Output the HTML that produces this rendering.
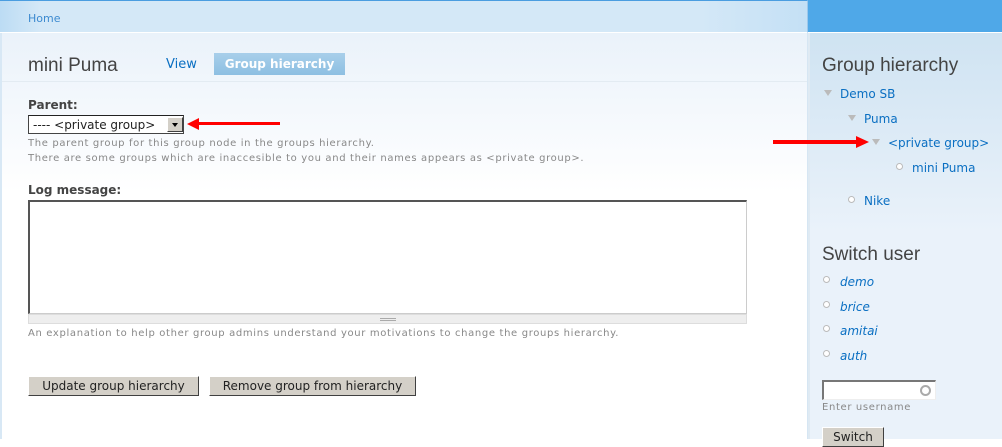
<!DOCTYPE html>
<html><head><style>
*{margin:0;padding:0;box-sizing:border-box}
body{width:1002px;height:439px;overflow:hidden;position:relative;background:#fff;font-family:"DejaVu Sans","Liberation Sans",sans-serif;font-size:12px;color:#444}
.a{position:absolute}
a{color:#0a6fc2;text-decoration:none}
.topbar{left:0;top:0;width:808px;height:33px;background:linear-gradient(90deg,#bcdcf4 0,#d4e8f7 40px,#d4e8f7 700px,#c4e0f5);border-top:1px solid #4a9de0;border-right:1px solid #9cc8ec;border-bottom:1px solid #fff}
.topr{left:808px;top:0;width:194px;height:33px;background:#4fa8e8;border-bottom:1px solid #fff}
.main{left:0;top:33px;width:808px;height:406px;background:linear-gradient(#eaf2fa 0,#fff 160px);border-left:2px solid #d8e8f5;border-right:1px solid #d6e6f3}
.side{left:808px;top:33px;width:194px;height:406px;background:linear-gradient(#cfe3f2,#eaf2fa 200px);border-left:2px solid #dfeaf3}
.tri{display:inline-block;width:0;height:0;border-left:4px solid transparent;border-right:4px solid transparent;border-top:6px solid #bbb;}
.circ{width:7px;height:7px;border:1px solid #bbb;border-radius:50%;background:#fff}
.desc{font-size:10px;color:#888;letter-spacing:.65px}
.btn{background:#d4d0c8;border:1px solid #fff;border-right-color:#404040;border-bottom-color:#404040;font-size:12px;color:#222;height:20px;text-align:center;line-height:18px}
</style></head><body>
<div class="a topbar"></div>
<div class="a topr"></div>
<a class="a" style="left:28px;top:12px;font-size:11px;color:#3c8ad0">Home</a>
<div class="a main"></div>
<div class="a" style="left:2px;top:81px;width:805px;height:1px;background:#e3ebf2"></div>
<div class="a" style="left:28px;top:55px;font-family:'Liberation Sans',sans-serif;font-size:19px;color:#444">mini Puma</div>
<a class="a" style="left:166px;top:57px;font-size:13px">View</a>
<div class="a" style="left:214px;top:53px;width:131px;height:22px;background:linear-gradient(#a8cfea,#8dbfe2);color:#fff;font-weight:bold;font-size:12px;text-align:center;line-height:22px">Group hierarchy</div>
<div class="a" style="left:28px;top:98px;font-weight:bold;font-size:12px">Parent:</div>
<div class="a" style="left:28px;top:115px;width:156px;height:19px;border:1px solid #444;border-top-color:#222;background:#fff;font-size:12px;line-height:18px;padding-left:4px;color:#222">---- &lt;private group&gt;</div>
<div class="a" style="left:167px;top:117px;width:16px;height:15px;background:#d4d0c8;border:1px solid #fff;border-right-color:#404040;border-bottom-color:#404040"><div style="margin:5px 0 0 4px;width:0;height:0;border-left:3px solid transparent;border-right:3px solid transparent;border-top:4px solid #000"></div></div>
<svg class="a" style="left:185px;top:117px" width="97" height="14"><path d="M2 7 L14 1 L14 5 L95 5 L95 8 L14 8 L14 13 Z" fill="#f00"/></svg>
<div class="a desc" style="left:28px;top:138px">The parent group for this group node in the groups hierarchy.</div>
<div class="a desc" style="left:28px;top:153px">There are some groups which are inaccesible to you and their names appears as &lt;private group&gt;.</div>
<div class="a" style="left:28px;top:183px;font-weight:bold;font-size:12px">Log message:</div>
<div class="a" style="left:28px;top:200px;width:719px;height:114px;border:2px solid #555;border-right:1px solid #ccc;border-bottom:1px solid #ccc;background:#fff"></div>
<div class="a" style="left:28px;top:314px;width:719px;height:10px;background:#eee;border:1px solid #ddd"><div style="margin:3px auto 0;width:16px;height:3px;border-top:1px solid #aaa;border-bottom:1px solid #aaa"></div></div>
<div class="a desc" style="left:28px;top:328px">An explanation to help other group admins understand your motivations to change the groups hierarchy.</div>
<div class="btn a" style="left:28px;top:376px;width:171px">Update group hierarchy</div>
<div class="btn a" style="left:209px;top:376px;width:207px">Remove group from hierarchy</div>
<div class="a side"></div>
<div class="a" style="left:822px;top:55px;font-family:'Liberation Sans',sans-serif;font-size:19px;color:#444">Group hierarchy</div>
<div class="a tri" style="left:824px;top:90px"></div><a class="a" style="left:840px;top:87px">Demo SB</a>
<div class="a tri" style="left:848px;top:115px"></div><a class="a" style="left:864px;top:112px">Puma</a>
<div class="a tri" style="left:872px;top:139px"></div><a class="a" style="left:888px;top:136px">&lt;private group&gt;</a>
<div class="a circ" style="left:896px;top:163px"></div><a class="a" style="left:912px;top:161px">mini Puma</a>
<div class="a circ" style="left:848px;top:196px"></div><a class="a" style="left:864px;top:194px">Nike</a>
<svg class="a" style="left:772px;top:135px" width="100" height="14"><path d="M1 5 L84 5 L84 1 L97 7 L84 13 L84 9 L1 9 Z" fill="#f00"/></svg>
<div class="a" style="left:822px;top:244px;font-family:'Liberation Sans',sans-serif;font-size:19px;color:#444">Switch user</div>
<div class="a circ" style="left:823px;top:276px"></div><a class="a" style="left:840px;top:275px;font-style:italic">demo</a>
<div class="a circ" style="left:823px;top:301px"></div><a class="a" style="left:840px;top:300px;font-style:italic">brice</a>
<div class="a circ" style="left:823px;top:325px"></div><a class="a" style="left:840px;top:324px;font-style:italic">amitai</a>
<div class="a circ" style="left:823px;top:350px"></div><a class="a" style="left:840px;top:349px;font-style:italic">auth</a>
<div class="a" style="left:822px;top:380px;width:114px;height:20px;background:#fff;border:2px solid #777;border-right:1px solid #eee;border-bottom:1px solid #eee"><div style="position:absolute;right:4px;top:3px;width:11px;height:11px;border:2px solid #aaa;border-radius:50%"></div></div>
<div class="a desc" style="left:822px;top:402px">Enter username</div>
<div class="btn a" style="left:822px;top:427px;width:62px">Switch</div>
</body></html>
